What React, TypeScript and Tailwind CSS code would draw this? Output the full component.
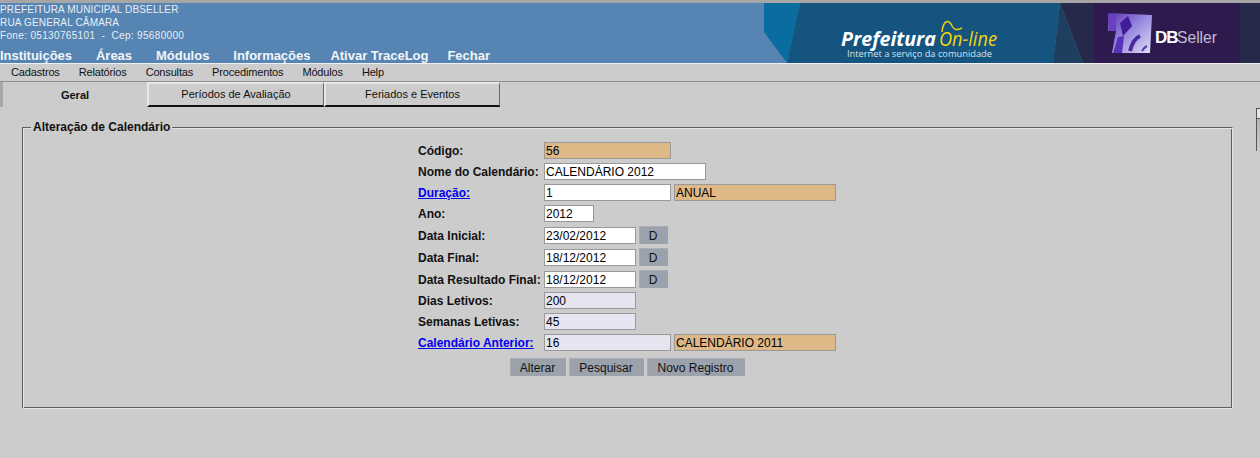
const field = "h-[17px] border border-[#999999] px-[1px] text-[12px] leading-none text-black outline-none";
const beige = "bg-[#deb887]";
const lilac = "bg-[#e6e4f1]";
const white = "bg-white";
const btn = "h-[18px] bg-[#9ca2ab] pr-[2px] text-[12px] leading-none text-[#111] border-t border-l border-[#a8adb5]";
const tab = "flex h-[25px] items-center justify-center border-l-2 border-t-2 border-b-2 border-r border-l-[#e8e8e8] border-t-[#e8e8e8] border-b-[#111] border-r-[#666] text-[11px] leading-none text-[#111]";

function Field({ value, w, bg }: { value: string; w: string; bg: string }) {
  return <input readOnly value={value} className={`${field} ${w} ${bg}`} />;
}

function Row({ label, link, h, children }: { label: string; link?: boolean; h: string; children: React.ReactNode }) {
  return (
    <div className={`flex items-start ${h}`}>
      <div className="flex h-[17px] w-[126px] shrink-0 items-center whitespace-nowrap text-[12px] font-bold leading-none">
        {link ? <a href="#" className="text-[#0000ee] underline">{label}</a> : <span className="text-[#111]">{label}</span>}
      </div>
      <div className="flex items-start gap-[3px]">{children}</div>
    </div>
  );
}

function DateBtn() {
  return <button className={`${btn} mt-[-1px] w-[29px]`}>D</button>;
}

function Banner() {
  return (
    <svg width="496" height="60" viewBox="0 0 496 60" className="block shrink-0">
      <defs>
        <linearGradient id="cube" x1="0" y1="0" x2="1" y2="1">
          <stop offset="0" stopColor="#5a34b0" />
          <stop offset="0.5" stopColor="#9a8ce0" />
          <stop offset="1" stopColor="#e2def5" />
        </linearGradient>
        <filter id="soft" x="-10%" y="-10%" width="120%" height="120%">
          <feGaussianBlur stdDeviation="0.5" />
        </filter>
      </defs>
      <rect width="496" height="60" fill="#5785b3" />
      <polygon points="0,0 36,0 23,60 0,29" fill="#0a6d9f" />
      <polygon points="36,0 296,0 289,60 23,60" fill="#14547f" />
      <polygon points="296,0 319,60 289,60" fill="#1f3f60" />
      <polygon points="296,0 496,0 496,60 319,60" fill="#27294a" />
      <rect x="330" y="0" width="146" height="60" fill="#2e1a4e" />
      <text x="77" y="43" fontFamily="'Open Sans', 'Liberation Sans', sans-serif" fontSize="20" fontStyle="italic" fontWeight="700" fill="#ffffff" textLength="95" lengthAdjust="spacingAndGlyphs">Prefeitura</text>
      <text x="175" y="43" fontFamily="'Open Sans', 'Liberation Sans', sans-serif" fontSize="20" fontStyle="italic" fill="#f2d30f" textLength="58" lengthAdjust="spacingAndGlyphs">On-line</text>
      <path d="M178 29C179 20 183 15 187 21C190 27 192 28 198 25" fill="none" stroke="#f2d30f" strokeWidth="1.5" />
      <text x="83" y="54" fontFamily="'Open Sans', 'Liberation Sans', sans-serif" fontSize="9.5" fill="#d8e2ec" textLength="145" lengthAdjust="spacingAndGlyphs">Internet a serviço da comunidade</text>
      <g filter="url(#soft)">
        <polygon points="344,10 388,12 386,50 348,50 352,28 344,28" fill="url(#cube)" />
        <polygon points="345,12 352,12 352,28 345,28" fill="#6a3fc0" />
        <polygon points="356,20 364,13 368,23 359,33" fill="#3f1c9a" />
        <polygon points="349,50 354,34 360,33 358,50" fill="#5a30b8" />
        <path d="M366 48C368 40 371 35 376 33" fill="none" stroke="#4a2a9a" strokeWidth="4" />
        <path d="M378 48C379 46 381 44 383 43" fill="none" stroke="#5a3aa8" strokeWidth="2" />
      </g>
      <text x="391" y="40" fontFamily="'Liberation Sans', sans-serif" fontSize="17" fontWeight="700" fill="#ffffff" letterSpacing="-1">DB</text>
      <text x="413" y="40" fontFamily="'Liberation Sans', sans-serif" fontSize="17" fill="#c4bdd2" textLength="40" lengthAdjust="spacingAndGlyphs">Seller</text>
    </svg>
  );
}

export default function App() {
  const menu = [["Instituições", "mr-[24px]"], ["Áreas", "mr-[24px]"], ["Módulos", "mr-[24px]"], ["Informações", "mr-[20px]"], ["Ativar TraceLog", "mr-[19px]"], ["Fechar", ""]];
  const nav = ["Cadastros", "Relatórios", "Consultas", "Procedimentos", "Módulos", "Help"];
  return (
    <div className="h-[458px] w-[1260px] overflow-hidden bg-[#cccccc] font-['Liberation_Sans',Arial,sans-serif] text-black">
      <div className="h-[3px] bg-[#a6a6a6]" />
      <header className="flex h-[60px] justify-between bg-[#5785b3]">
        <div className="flex flex-col">
          <div className="flex flex-col text-[10px] leading-[13px] tracking-[0.16px] text-[#e8eef5]">
            <span>PREFEITURA MUNICIPAL DBSELLER</span>
            <span>RUA GENERAL CÂMARA</span>
            <span className="tracking-[0.34px] whitespace-pre">Fone: 05130765101  -  Cep: 95680000</span>
          </div>
          <div className="mt-[6px] flex text-[13px] font-bold leading-[15px] tracking-[-0.02px] text-[#f2f5f8]">
            {menu.map(([t, m]) => <span key={t} className={m}>{t}</span>)}
          </div>
        </div>
        <Banner />
      </header>
      <div className="h-px bg-[#f0f0f0]" />
      <nav className="box-content flex h-[17px] items-center gap-[19px] border-b border-[#8f8f8f] pl-[11px] text-[11px] leading-none tracking-[-0.16px] text-[#111]">
        {nav.map((n) => <span key={n}>{n}</span>)}
      </nav>
      <div className="flex h-[26px] items-start">
        <div className="flex h-[25px] w-[147px] items-center justify-center border-l-[3px] border-[#a8a8a8] pt-[1px] text-[11px] font-bold leading-none text-[#111]">Geral</div>
        <div className={`${tab} w-[177px]`}>Períodos de Avaliação</div>
        <div className={`${tab} w-[176px]`}>Feriados e Eventos</div>
      </div>
      <main className="flex items-start">
        <fieldset className="ml-[22px] mt-[13px] h-[288px] w-[1211px] border border-t-[#5e5e62] border-l-[#5e5e62] border-r-[#e4e4e4] border-b-[#e4e4e4] shadow-[inset_1px_1px_0_#e4e4e4,inset_-1px_-1px_0_#5e5e62]">
          <legend className="ml-[8px] bg-[#cccccc] px-[2px] text-[12px] font-bold leading-[13px] text-[#111]">Alteração de Calendário</legend>
          <div className="ml-[395px] mt-[8px] flex flex-col">
            <Row label="Código:" h="h-[21px]"><Field value="56" w="w-[127px]" bg={beige} /></Row>
            <Row label="Nome do Calendário:" h="h-[21px]"><Field value="CALENDÁRIO 2012" w="w-[162px]" bg={white} /></Row>
            <Row label="Duração:" link h="h-[21px]"><Field value="1" w="w-[127px]" bg={white} /><Field value="ANUAL" w="w-[162px]" bg={beige} /></Row>
            <Row label="Ano:" h="h-[22px]"><Field value="2012" w="w-[50px]" bg={white} /></Row>
            <Row label="Data Inicial:" h="h-[22px]"><Field value="23/02/2012" w="w-[92px]" bg={white} /><DateBtn /></Row>
            <Row label="Data Final:" h="h-[22px]"><Field value="18/12/2012" w="w-[92px]" bg={white} /><DateBtn /></Row>
            <Row label="Data Resultado Final:" h="h-[21px]"><Field value="18/12/2012" w="w-[92px]" bg={white} /><DateBtn /></Row>
            <Row label="Dias Letivos:" h="h-[21px]"><Field value="200" w="w-[92px]" bg={lilac} /></Row>
            <Row label="Semanas Letivas:" h="h-[21px]"><Field value="45" w="w-[92px]" bg={lilac} /></Row>
            <Row label="Calendário Anterior:" link h="h-[24px]"><Field value="16" w="w-[127px]" bg={lilac} /><Field value="CALENDÁRIO 2011" w="w-[162px]" bg={beige} /></Row>
            <div className="ml-[92px] flex gap-[3px]">
              <button className={`${btn} w-[56px]`}>Alterar</button>
              <button className={`${btn} w-[75px]`}>Pesquisar</button>
              <button className={`${btn} w-[98px]`}>Novo Registro</button>
            </div>
          </div>
        </fieldset>
        <div className="ml-[23px] flex w-[4px] flex-col border-l border-t border-[#55555a]">
          <div className="h-[10px] border-b border-[#55555a] bg-[#e4e4e4]" />
          <div className="h-[32px] bg-gradient-to-b from-[#b4b4b4] to-[#cccccc]" />
        </div>
      </main>
    </div>
  );
}
